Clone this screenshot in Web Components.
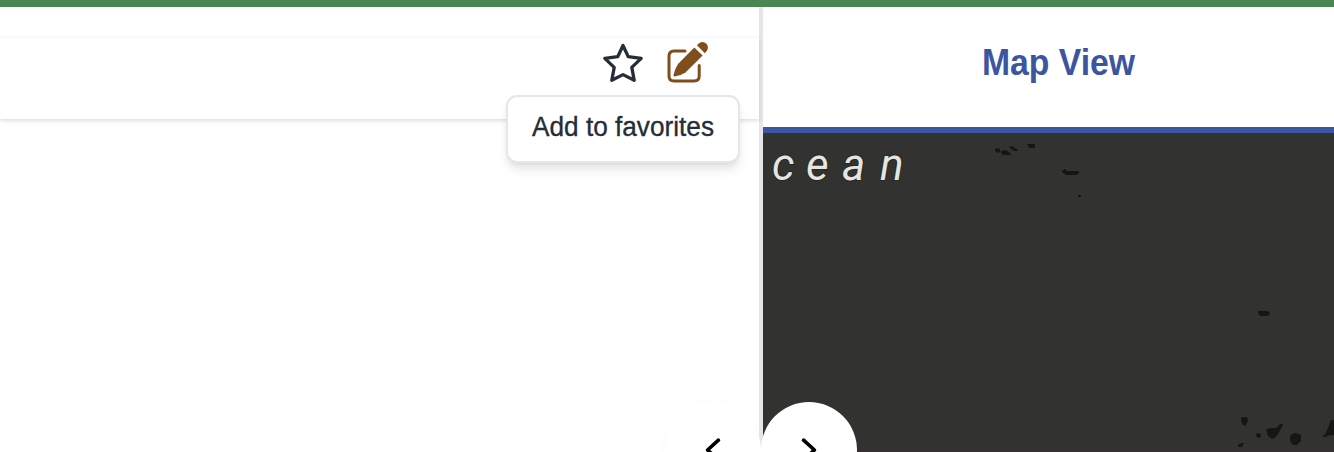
<!DOCTYPE html>
<html lang="en">
<head>
<meta charset="utf-8">
<title>Map View</title>
<style>
html,body{margin:0;height:100%;overflow:hidden;background:#fff;font-family:"Liberation Sans",Roboto,sans-serif}
</style>
</head>
<body>
<app-shell>
  <detail-pane slot="detail"><hover-tip>Add to favorites</hover-tip></detail-pane>
  <map-pane slot="map" heading="Map View"></map-pane>
</app-shell>
<script>
const define = (name, html, setup) => customElements.define(name, class extends HTMLElement {
  constructor() {
    super();
    this.attachShadow({mode: 'open'}).innerHTML = html;
  }
  connectedCallback() { if (setup) setup(this); }
});

/* One line of text fitted to a fixed width */
customElements.define('fit-text', class extends HTMLElement {
  connectedCallback() {
    if (this.shadowRoot) return;
    const a = n => this.getAttribute(n);
    this.attachShadow({mode: 'open'}).innerHTML = `
      <style>:host{display:block;line-height:0}svg{display:block;overflow:visible}</style>
      <svg width="${a('width')}" height="${a('height')}"><text x="0" y="${a('baseline')}"
        textLength="${a('width')}" lengthAdjust="spacingAndGlyphs" font-size="${a('size')}"
        font-weight="${a('weight')}" fill="currentColor" stroke="currentColor" stroke-width="${a('grade') || 0}"></text></svg>`;
    this.shadowRoot.querySelector('text').textContent = a('text');
  }
});

define('star-icon', `
  <style>:host{display:block;width:42px;height:42px}svg{display:block}</style>
  <svg width="42" height="42" viewBox="602 42 42 42" fill="none" stroke="#242d38" stroke-width="3.3" stroke-linejoin="round">
    <path d="M623 45.5 L617.8 56.6 L604.8 58.4 L614.2 67.4 L611.8 80.3 L623 74.6 L634.2 80.3 L631.8 67.4 L641.2 58.4 L628.2 56.6 Z"/>
  </svg>`);

define('edit-icon', `
  <style>:host{display:block;width:44px;height:44px}svg{display:block}</style>
  <svg width="44" height="44" viewBox="666 40 44 44">
    <path d="M685 51 H674 Q669 51 669 56 V76 Q669 81 674 81 H694 Q699.2 81 699.2 76 V65.5" fill="none" stroke="#804d1c" stroke-width="3" stroke-linecap="round"/>
    <path d="M694.3 47.5 L702.6 55.6 L685.5 72.5 Q681 75.6 674.6 76.4 Q673.2 76.4 673.5 75 Q674.8 69 678 64 Z" fill="#804d1c"/>
    <path d="M696.9 45.2 L699.4 43 Q703 40.7 706.2 43.6 Q709.2 47 707 50.6 L704.8 53.2 Z" fill="#804d1c"/>
  </svg>`);

define('hover-tip', `
  <style>
    :host{display:block;box-sizing:border-box;width:234px;height:68px;padding:14px 24px;
      background:#fff;border:2px solid #e5e5ea;border-radius:11px;color:#242d38;
      box-shadow:0 8px 12px -2px rgba(0,0,0,.1),0 4px 7px -3px rgba(0,0,0,.08)}
  </style>
  <div id="label"></div><slot hidden></slot>`, el => {
  const t = document.createElement('fit-text');
  const o = {width: 182, height: 34, baseline: 25, size: 27.5, weight: 400, grade: 0.35, text: el.textContent};
  for (const k in o) t.setAttribute(k, o[k]);
  el.shadowRoot.getElementById('label').replaceChildren(t);
});

define('nav-button', `
  <style>
    :host{display:flex;justify-content:center;box-sizing:border-box;width:96px;height:96px;padding-top:34px;border-radius:50%;background:#fff}
    :host([dir-to=left]){box-shadow:0 0 14px rgba(0,0,0,.018)}
    :host([dir-to=left]) svg{transform:scaleX(-1)}
    svg{display:block}
  </style>
  <svg width="18" height="28" viewBox="0 0 18 28" fill="none" stroke="#000" stroke-width="3.6" stroke-linecap="round" stroke-linejoin="round"><path d="M3.6 4.2 L14.4 14 L3.6 23.8"/></svg>`);

define('detail-pane', `
  <style>
    :host{display:block;position:relative;height:445px;background:#fff}
    .top{height:31px;background:linear-gradient(#fff 26px,#fbfbfb)}
    .bar{height:81px;box-sizing:border-box;padding:2px 49px 0 0;display:flex;gap:22px;justify-content:flex-end;background:#fff;
      box-shadow:0 2px 4px rgba(0,0,0,.13)}
    star-icon{margin-top:2px}
    ::slotted(hover-tip){position:absolute;left:506px;top:88px}
  </style>
  <div class="top"></div>
  <div class="bar"><star-icon></star-icon><edit-icon></edit-icon></div>
  <slot></slot>`);

define('map-canvas', `
  <style>
    :host{display:block;height:319px;background:#323230}svg{display:block}
    text{font:italic 400 44px Roboto,"Open Sans",sans-serif}
  </style>
  <svg width="571" height="319" viewBox="763 133 571 319">
    <g fill="#161615">
      <path d="M995 149l2-1 3 1 0 3-3 1-2-2zM1001 151l5-1 5 4 0 1-8 0-2-2zM1009 147l3-1 6 4 0 1-4 0-3-2zM1027 144h8v4h-6zM1062 171l3-2 2 2h12v2l-2 2h-11l-4-3zM1078 195h3v2h-3zM1258 311h10l2 2-2 3h-8l-2-3z"/>
      <path d="M1241 418l2-1 4 0 1 4-3 5-2-1-2-4zM1256 434l2-1 3 1 0 3-3 1-2-2zM1266 429l5-1 5 0 4-4 3 0-1 3-4 7-3 4-3 1-4-3zM1290 437l2-3 4-1 5 2 0 6-4 4-4 0-3-4zM1238 445l3-2 3 0-2 4-4 0z"/>
      <path d="M1334 420h-3l-5 13-4 4 3 0 5-2 4 0z"/>
    </g>
    <path d="M763 448h571v4h-571z" fill="#342f31"/>
    <text y="180" x="772 806 842 880" fill="#e5e5e1" stroke="#20201f" stroke-width="2" stroke-opacity=".6" paint-order="stroke">cean</text>
  </svg>`);

define('map-pane', `
  <style>
    :host{display:block;height:445px;background:#fff;overflow:hidden}
    header{height:126px;box-sizing:border-box;border-bottom:6px solid #3b55a0;color:#3b55a0;padding:34px 0 0 219px}
  </style>
  <header><fit-text width="153" height="42" baseline="34" size="36" weight="700"></fit-text></header>
  <map-canvas></map-canvas>`, el => {
  const t = el.shadowRoot.querySelector('fit-text');
  const f = document.createElement('fit-text');
  for (const x of t.attributes) f.setAttribute(x.name, x.value);
  f.setAttribute('text', el.getAttribute('heading'));
  t.replaceWith(f);
});

define('app-shell', `
  <style>
    :host{display:block;position:relative;width:1334px;height:452px;overflow:hidden;background:#fff}
    .accent{height:7px;background:#4a8651}
    .panes{display:grid;grid-template-columns:759px 4px 571px}
    .rule{background:#e5e5ea}
    nav{position:absolute;left:665px;top:402px;display:flex}
  </style>
  <div class="accent"></div>
  <div class="panes"><slot name="detail"></slot><div class="rule"></div><slot name="map"></slot></div>
  <nav><nav-button dir-to="left"></nav-button><nav-button dir-to="right"></nav-button></nav>`);

</script>
</body>
</html>
